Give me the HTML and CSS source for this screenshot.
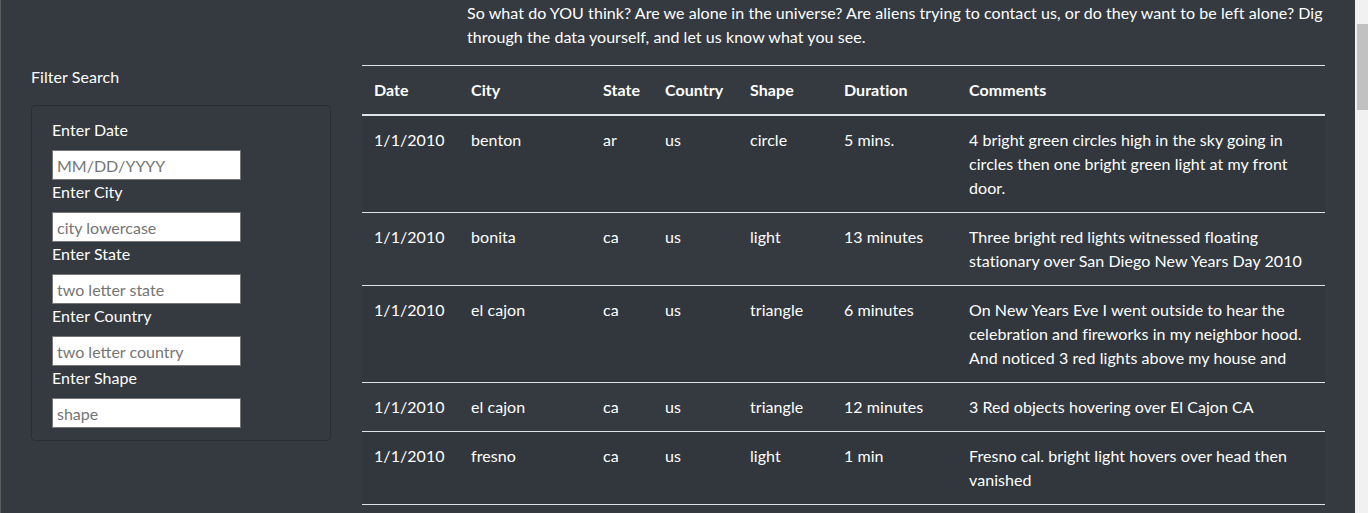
FILE: index.html
```html
<!DOCTYPE html>
<html lang="en">
<head>
<meta charset="utf-8">
<title>UFO Sightings</title>
<link rel="stylesheet" href="styles.css">
</head>
<body>
<div class="page">
  <p class="intro">So what do YOU think? Are we alone in the universe? Are aliens trying to contact us, or do they want to be left alone? Dig through the data yourself, and let us know what you see.</p>

  <aside class="sidebar">
    <div class="filter-title">Filter Search</div>
    <form class="filters">
      <label class="field-label" for="datetime">Enter Date</label>
      <input class="field-input" id="datetime" type="text" placeholder="MM/DD/YYYY">
      <label class="field-label" for="city">Enter City</label>
      <input class="field-input" id="city" type="text" placeholder="city lowercase">
      <label class="field-label" for="state">Enter State</label>
      <input class="field-input" id="state" type="text" placeholder="two letter state">
      <label class="field-label" for="country">Enter Country</label>
      <input class="field-input" id="country" type="text" placeholder="two letter country">
      <label class="field-label" for="shape">Enter Shape</label>
      <input class="field-input" id="shape" type="text" placeholder="shape">
    </form>
  </aside>

  <table class="ufo-table">
    <colgroup>
      <col class="c-date"><col class="c-city"><col class="c-state"><col class="c-country"><col class="c-shape"><col class="c-duration"><col class="c-comments">
    </colgroup>
    <thead>
      <tr><th>Date</th><th>City</th><th>State</th><th>Country</th><th>Shape</th><th>Duration</th><th>Comments</th></tr>
    </thead>
    <tbody>
      <tr><td>1/1/2010</td><td>benton</td><td>ar</td><td>us</td><td>circle</td><td>5 mins.</td><td>4 bright green circles high in the sky going in circles then one bright green light at my front door.</td></tr>
      <tr><td>1/1/2010</td><td>bonita</td><td>ca</td><td>us</td><td>light</td><td>13 minutes</td><td>Three bright red lights witnessed floating stationary over San Diego New Years Day 2010</td></tr>
      <tr><td>1/1/2010</td><td>el cajon</td><td>ca</td><td>us</td><td>triangle</td><td>6 minutes</td><td>On New Years Eve I went outside to hear the celebration and fireworks in my neighbor hood. And noticed 3 red lights above my house and</td></tr>
      <tr><td>1/1/2010</td><td>el cajon</td><td>ca</td><td>us</td><td>triangle</td><td>12 minutes</td><td>3 Red objects hovering over El Cajon CA</td></tr>
      <tr><td>1/1/2010</td><td>fresno</td><td>ca</td><td>us</td><td>light</td><td>1 min</td><td>Fresno cal. bright light hovers over head then vanished</td></tr>
    </tbody>
  </table>
</div>
<div class="scrollbar"><div class="scrollbar-thumb"></div></div>
</body>
</html>
```
FILE: styles.css
```css
html, body {
  height: 100%;
}
body {
  margin: 0;
  overflow: hidden;
  background: #343a40;
  color: #ffffff;
  font-family: Lato, "Open Sans", "Liberation Sans", sans-serif;
  font-size: 16px;
  line-height: 24px;
  letter-spacing: 0.06px;
  border-left: 1px solid #5a5b5d;
}
.page {
  display: grid;
  grid-template-columns: 300px 963px;
  column-gap: 31px;
  padding-left: 30px;
  padding-top: 1px;
}
.intro {
  grid-column: 2;
  grid-row: 1;
  margin: 0 0 16px 105px;
  width: 858px;
}
.sidebar {
  grid-column: 1;
  grid-row: 2;
}
.filter-title {
  margin-bottom: 16px;
}
.filters {
  display: flex;
  flex-direction: column;
  align-items: flex-start;
  border: 1px solid rgba(0, 0, 0, 0.2);
  border-radius: 4px;
  padding: 12px 20px 12px;
  margin: 0;
}
.field-label {
  margin-bottom: 8px;
}
.field-input {
  box-sizing: border-box;
  width: 189px;
  height: 30px;
  margin: 0;
  padding: 1px 4px;
  border: 1px solid #767676;
  border-radius: 0;
  background: #ffffff;
  font-family: inherit;
  font-size: 16px;
  line-height: 24px;
  color: #222;
}
.field-input::placeholder {
  color: #757575;
}
.ufo-table {
  grid-column: 2;
  grid-row: 2;
  width: 963px;
  border-collapse: collapse;
  table-layout: fixed;
}
.c-date { width: 97px; }
.c-city { width: 132px; }
.c-state { width: 62px; }
.c-country { width: 85px; }
.c-shape { width: 94px; }
.c-duration { width: 125px; }
.c-comments { width: 368px; }
.ufo-table th,
.ufo-table td {
  padding: 12px;
  text-align: left;
  border-top: 1px solid #dee2e6;
}
.ufo-table th {
  font-weight: 700;
  vertical-align: bottom;
  border-bottom: 2px solid #dee2e6;
}
.ufo-table td {
  vertical-align: top;
}
.ufo-table tbody tr:last-child td {
  border-bottom: 1px solid #dee2e6;
}
.ufo-table tbody tr:nth-child(odd) {
  background: rgba(0, 0, 0, 0.05);
}
.scrollbar {
  position: fixed;
  top: 0;
  right: 0;
  width: 13px;
  height: 100%;
  background: #f1f1f1;
}
.scrollbar-thumb {
  margin: 24px 0 0 2px;
  width: 11px;
  height: 86px;
  background: #c1c1c1;
}
```
